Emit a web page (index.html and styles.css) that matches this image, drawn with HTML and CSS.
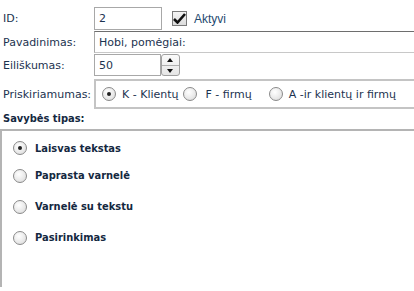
FILE: index.html
```html
<!DOCTYPE html>
<html lang="lt">
<head>
    <meta charset="UTF-8">
    <title>Savybė</title>
    <link rel="stylesheet" href="styles.css">
</head>
<body>
    <div class="form">
        <div class="row row-id">
            <label class="label">ID:</label>
            <div class="input input-short">2</div>
            <span class="checkbox">
                <svg width="13" height="11" viewBox="0 0 13 11"><path d="M1 6 L4.5 9.5 L12 1" fill="none" stroke="#111" stroke-width="2.6"/></svg>
            </span>
            <span class="check-text">Aktyvi</span>
        </div>

        <div class="row row-name">
            <label class="label">Pavadinimas:</label>
            <div class="input input-wide">Hobi, pomėgiai:</div>
        </div>

        <div class="row row-order">
            <label class="label">Eiliškumas:</label>
            <div class="input input-num">50</div>
            <div class="spinner">
                <span class="spin-up"></span>
                <span class="spin-down"></span>
            </div>
        </div>

        <div class="row row-assign">
            <label class="label">Priskiriamumas:</label>
            <div class="radio-box">
                <span class="option option-k"><span class="radio checked"></span><span class="radio-text">K - Klientų</span></span>
                <span class="option option-f"><span class="radio"></span><span class="radio-text">F - firmų</span></span>
                <span class="option"><span class="radio"></span><span class="radio-text">A -ir klientų ir firmų</span></span>
            </div>
        </div>

        <div class="section-title">Savybės tipas:</div>
    </div>

    <div class="type-box">
        <div class="type-row"><span class="radio checked"></span><span class="type-text">Laisvas tekstas</span></div>
        <div class="type-row"><span class="radio"></span><span class="type-text">Paprasta varnelė</span></div>
        <div class="type-row"><span class="radio"></span><span class="type-text">Varnelė su tekstu</span></div>
        <div class="type-row"><span class="radio"></span><span class="type-text">Pasirinkimas</span></div>
    </div>
</body>
</html>
```

FILE: styles.css
```css
body {
    margin: 0;
    background: #fff;
    font-family: "DejaVu Sans", Verdana, sans-serif;
    font-size: 11px;
    color: #1c3350;
    overflow: hidden;
    height: 291px;
}

.form {
    padding: 7px 0 0 3px;
}

.row {
    display: flex;
    align-items: center;
}

.label {
    width: 91px;
    flex: none;
    color: #1c3350;
}

.input {
    box-sizing: border-box;
    height: 23px;
    line-height: 21px;
    padding: 0 4px;
    border: 1px solid #a8a8a8;
    color: #1c3350;
    background: #fff;
}

.input-short {
    width: 68px;
}

.row-name {
    margin-top: 1px;
}

.input-wide {
    flex: 1;
    margin-right: -10px;
    height: 22px;
    border-color: #6e6e6e #c8c8c8 #c8c8c8 #a8a8a8;
}

.row-order {
    margin-top: 1px;
}

.input-num {
    width: 67px;
    height: 22px;
}

.checkbox {
    box-sizing: border-box;
    width: 15px;
    height: 15px;
    margin-left: 10px;
    border: 1px solid #7a7a7a;
    background: linear-gradient(#f4f4f4, #dcdcdc);
    display: flex;
    align-items: center;
    justify-content: center;
}

.check-text {
    margin-left: 7px;
    font-family: "Liberation Sans", Arial, sans-serif;
    font-size: 12px;
    color: #1f4a70;
}

.spinner {
    box-sizing: border-box;
    width: 19px;
    height: 22px;
    border: 1px solid #a0a0a0;
    border-radius: 3px;
    display: flex;
    flex-direction: column;
    background: linear-gradient(#fafafa, #e6e6e6);
}

.spinner span {
    flex: 1;
    position: relative;
}

.spin-up {
    border-bottom: 1px solid #b0b0b0;
}

.spin-up::after,
.spin-down::after {
    content: "";
    position: absolute;
    left: 5px;
    border-left: 3px solid transparent;
    border-right: 3px solid transparent;
}

.spin-up::after {
    top: 3px;
    border-bottom: 4px solid #111;
}

.spin-down::after {
    top: 3px;
    border-top: 4px solid #111;
}

.row-assign {
    margin-top: 3px;
}

.radio-box {
    flex: 1;
    margin-right: -10px;
    box-sizing: border-box;
    height: 30px;
    border: 2px solid #c4c4c4;
    border-right: none;
    display: flex;
    align-items: center;
    padding-left: 6px;
}

.option {
    display: flex;
    align-items: center;
    margin-right: 4px;
}

.option-f {
    margin-right: 17px;
}

.option-f .radio-text {
    margin-left: 9px;
}

.radio {
    box-sizing: border-box;
    width: 14px;
    height: 14px;
    border-radius: 50%;
    border: 1px solid #8a8a8a;
    background: radial-gradient(circle at 40% 35%, #ffffff, #e8e8e8 60%, #d4d4d4);
    flex: none;
    position: relative;
}

.radio.checked::after {
    content: "";
    position: absolute;
    left: 4px;
    top: 4px;
    width: 4px;
    height: 4px;
    border-radius: 50%;
    background: #222;
}

.radio-text {
    margin-left: 6px;
}

.section-title {
    margin-top: 3px;
    font-family: "DejaVu Sans Condensed", "DejaVu Sans", sans-serif;
    font-weight: bold;
    color: #14283f;
}

.type-box {
    box-sizing: border-box;
    margin-top: 4px;
    height: 158px;
    border-top: 2px solid #b4b4b4;
    border-left: 2px solid #b4b4b4;
    padding: 10px 0 0 11px;
}

.type-row {
    display: flex;
    align-items: center;
    height: 31px;
}

.type-row:first-child {
    height: 14px;
    margin-bottom: 5px;
}

.type-text {
    margin-left: 8px;
    font-family: "DejaVu Sans Condensed", "DejaVu Sans", sans-serif;
    font-weight: bold;
    color: #14283f;
}
```
